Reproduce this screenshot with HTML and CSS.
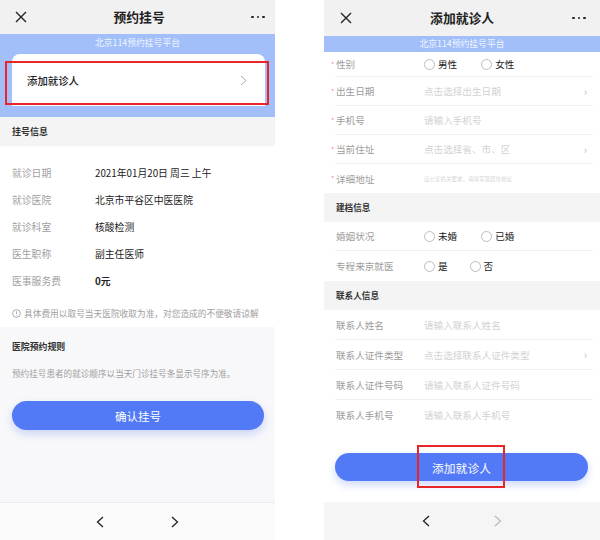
FILE: index.html
```html
<!DOCTYPE html>
<html lang="zh">
<head>
<meta charset="utf-8">
<title>预约挂号</title>
<link rel="stylesheet" href="styles.css">
</head>
<body>
<div class="screens">
  <div class="phone phone-left">
    <header class="nav">
      <svg class="nav-close" width="12" height="12" viewBox="0 0 12 12"><path d="M1 1L11 11M11 1L1 11" stroke="#222" stroke-width="1.4" fill="none"/></svg>
      <div class="nav-title">预约挂号</div>
      <div class="nav-more"><i></i><i></i><i></i></div>
    </header>
    <div class="hero">
      <div class="platform">北京114预约挂号平台</div>
      <div class="card">
        <span>添加就诊人</span>
        <svg width="7" height="11" viewBox="0 0 7 11"><path d="M1 1L6 5.5L1 10" stroke="#aaa" stroke-width="1" fill="none"/></svg>
      </div>
    </div>
    <div class="sec-title">挂号信息</div>
    <div class="info">
      <div class="info-row"><span class="info-label">就诊日期</span><span class="info-value">2021年01月20日 周三 上午</span></div>
      <div class="info-row"><span class="info-label">就诊医院</span><span class="info-value">北京市平谷区中医医院</span></div>
      <div class="info-row"><span class="info-label">就诊科室</span><span class="info-value">核酸检测</span></div>
      <div class="info-row"><span class="info-label">医生职称</span><span class="info-value">副主任医师</span></div>
      <div class="info-row"><span class="info-label">医事服务费</span><span class="info-value info-strong">0元</span></div>
      <div class="note"><svg width="9" height="9" viewBox="0 0 10 10"><circle cx="5" cy="5" r="4.3" stroke="#999" stroke-width="0.9" fill="none"/><path d="M5 2.6V5.6M5 6.8V7.6" stroke="#999" stroke-width="0.9"/></svg><span>具体费用以取号当天医院收取为准，对您造成的不便敬请谅解</span></div>
    </div>
    <div class="rules">
      <div class="rules-title">医院预约规则</div>
      <div class="rules-text">预约挂号患者的就诊顺序以当天门诊挂号条显示号序为准。</div>
      <div class="btn">确认挂号</div>
    </div>
    <footer class="toolbar">
      <svg width="8" height="12" viewBox="0 0 8 12"><path d="M7 1L1.5 6L7 11" stroke="#222" stroke-width="1.3" fill="none"/></svg>
      <svg width="8" height="12" viewBox="0 0 8 12"><path d="M1 1L6.5 6L1 11" stroke="#222" stroke-width="1.3" fill="none"/></svg>
    </footer>
    <div class="annot annot-card"></div>
  </div>

  <div class="phone phone-right">
    <header class="nav nav-right">
      <svg class="nav-close" width="12" height="12" viewBox="0 0 12 12"><path d="M1 1L11 11M11 1L1 11" stroke="#222" stroke-width="1.4" fill="none"/></svg>
      <div class="nav-title">添加就诊人</div>
      <div class="nav-more"><i></i><i></i><i></i></div>
    </header>
    <div class="band">北京114预约挂号平台</div>
    <div class="form">
      <div class="row row-first"><span class="req">*</span><span class="label">性别</span>
        <span class="radio"><i></i>男性</span><span class="radio radio-2"><i></i>女性</span></div>
      <div class="row"><span class="req">*</span><span class="label">出生日期</span><span class="ph">点击选择出生日期</span><span class="chev">›</span></div>
      <div class="row"><span class="req">*</span><span class="label">手机号</span><span class="ph">请输入手机号</span></div>
      <div class="row"><span class="req">*</span><span class="label">当前住址</span><span class="ph">点击选择省、市、区</span><span class="chev">›</span></div>
      <div class="row row-last"><span class="req">*</span><span class="label">详细地址</span><span class="ph ph-tiny">应公安机关要求，请填写现居住地址</span></div>
    </div>
    <div class="band-gray">建档信息</div>
    <div class="form">
      <div class="row"><span class="label">婚姻状况</span>
        <span class="radio"><i></i>未婚</span><span class="radio radio-2"><i></i>已婚</span></div>
      <div class="row row-last row-30"><span class="label">专程来京就医</span>
        <span class="radio"><i></i>是</span><span class="radio radio-3"><i></i>否</span></div>
    </div>
    <div class="band-gray">联系人信息</div>
    <div class="form">
      <div class="row row-30"><span class="label">联系人姓名</span><span class="ph">请输入联系人姓名</span></div>
      <div class="row row-30"><span class="label">联系人证件类型</span><span class="ph">点击选择联系人证件类型</span><span class="chev">›</span></div>
      <div class="row row-30"><span class="label">联系人证件号码</span><span class="ph">请输入联系人证件号码</span></div>
      <div class="row row-30 row-last"><span class="label">联系人手机号</span><span class="ph">请输入联系人手机号</span></div>
    </div>
    <div class="right-bottom">
      <div class="btn btn-right">添加就诊人</div>
    </div>
    <footer class="toolbar toolbar-right">
      <svg width="8" height="12" viewBox="0 0 8 12"><path d="M7 1L1.5 6L7 11" stroke="#222" stroke-width="1.3" fill="none"/></svg>
      <svg width="8" height="12" viewBox="0 0 8 12"><path d="M1 1L6.5 6L1 11" stroke="#bbb" stroke-width="1.3" fill="none"/></svg>
    </footer>
    <div class="annot annot-btn"></div>
  </div>
</div>
</body>
</html>
```

FILE: styles.css
```css
* { box-sizing: border-box; }
html, body { margin: 0; padding: 0; background: #fff; }
body {
  font-family: "Noto Sans CJK SC", "Noto Sans", "Liberation Sans", sans-serif;
  color: #222;
}
.screens {
  display: flex;
  gap: 49px;
  width: 600px;
  height: 540px;
  overflow: hidden;
}
.phone {
  position: relative;
  height: 540px;
  display: flex;
  flex-direction: column;
  flex-shrink: 0;
}
.phone-left { width: 275px; background: #f8f8fa; }
.phone-right { width: 276px; background: #fff; }

/* nav bar */
.nav {
  height: 34px;
  background: #f1f1f1;
  display: flex;
  align-items: center;
  justify-content: space-between;
  padding: 0 10px 0 15px;
  flex-shrink: 0;
}
.nav-right { height: 36px; padding: 0 14px 0 16px; }
.nav-close { display: block; }
.nav-title {
  font-size: 12.8px;
  font-weight: 700;
  color: #222;
  line-height: 1;
}
.nav-more { display: flex; gap: 3px; }
.nav-more i {
  display: block;
  width: 2.6px;
  height: 2.6px;
  border-radius: 50%;
  background: #222;
}

/* hero */
.hero {
  height: 83px;
  background: #a2bffa;
  display: flex;
  flex-direction: column;
  flex-shrink: 0;
}
.platform, .band {
  text-align: center;
  color: rgba(255,255,255,0.85);
  font-size: 8.8px;
  line-height: 18px;
  height: 18px;
}
.card {
  margin: 2px 10px 0 12px;
  height: 52px;
  background: #fff;
  border-radius: 8px 8px 0 0;
  display: flex;
  align-items: center;
  justify-content: space-between;
  padding: 0 18px 0 15px;
  font-size: 10.4px;
  font-weight: 500;
  color: #222;
}

.sec-title {
  height: 29px;
  line-height: 29px;
  background: #f4f4f4;
  padding-left: 12px;
  font-size: 9px;
  font-weight: 700;
  color: #333;
  flex-shrink: 0;
}

.info {
  background: #fff;
  padding: 13px 0 4px 12px;
  flex-shrink: 0;
}
.info-row {
  height: 27px;
  display: flex;
  align-items: center;
  font-size: 9.8px;
}
.info-label { width: 83px; color: #a0a0a0; }
.info-value { color: #222; }
.info-strong { font-weight: 700; }
.note {
  margin-top: 9px;
  height: 20px;
  display: flex;
  align-items: center;
  gap: 3px;
  font-size: 8.7px;
  color: #a0a0a0;
}
.note svg { display: block; }

.rules {
  flex: 1;
  background: #f8f8fa;
  padding: 13px 11px 0 12px;
  display: flex;
  flex-direction: column;
}
.rules-title {
  font-size: 8.9px;
  font-weight: 700;
  color: #333;
  line-height: 14px;
}
.rules-text {
  margin-top: 12px;
  font-size: 8.6px;
  color: #a0a0a0;
  line-height: 14px;
}
.btn {
  margin-top: 21px;
  height: 29px;
  border-radius: 15px;
  background: #5279f6;
  color: #fff;
  font-size: 11.5px;
  display: flex;
  align-items: center;
  justify-content: center;
  box-shadow: 0 4px 9px rgba(82,121,246,0.28);
}

.toolbar {
  height: 38px;
  border-top: 1px solid #ececec;
  background: #fafafa;
  display: flex;
  align-items: center;
  justify-content: center;
  gap: 67px;
  flex-shrink: 0;
}
.toolbar svg { display: block; }
.toolbar-right { border-top: none; background: #f5f5f5; gap: 64px; }

/* right form */
.band {
  height: 16px;
  line-height: 16px;
  background: #a2bffa;
  flex-shrink: 0;
}
.form { display: flex; flex-direction: column; flex-shrink: 0; }
.row {
  height: 29px;
  margin: 0 7px 0 11px;
  padding: 0 6px 0 1px;
  border-bottom: 1px solid #efefef;
  display: flex;
  align-items: center;
  font-size: 9.6px;
}
.row-first { height: 25px; }
.row-30 { height: 30px; }
.row-last { border-bottom: none; }
.req {
  display: inline-block;
  width: 5px;
  margin-left: -5px;
  color: #f08c8c;
  font-size: 7px;
  line-height: 1;
}
.label { width: 88px; color: #9c9c9c; flex-shrink: 0; }
.ph { color: #d2d2d2; flex: 1; }
.ph-tiny { font-size: 5.5px; color: #d6d6d6; }
.chev { color: #bbb; font-size: 11px; line-height: 1; }
.radio {
  display: flex;
  align-items: center;
  gap: 3px;
  color: #222;
}
.radio i {
  display: block;
  width: 11px;
  height: 11px;
  border: 1px solid #bdbdbd;
  border-radius: 50%;
}
.radio-2 { margin-left: 24px; }
.radio-3 { margin-left: 22px; }

.band-gray {
  height: 29px;
  line-height: 29px;
  background: #f4f4f4;
  padding-left: 12px;
  font-size: 8.6px;
  font-weight: 700;
  color: #333;
  flex-shrink: 0;
}

.right-bottom {
  flex: 1;
  padding: 23px 12px 0 11px;
}
.btn-right { margin-top: 0; height: 28px; font-size: 11.8px; }

/* annotations */
.annot {
  position: absolute;
  border: 2px solid #e8262a;
  pointer-events: none;
}
.annot-card { left: 5px; top: 61px; width: 264px; height: 44px; }
.annot-btn { left: 93px; top: 445px; width: 88px; height: 43px; }
```
